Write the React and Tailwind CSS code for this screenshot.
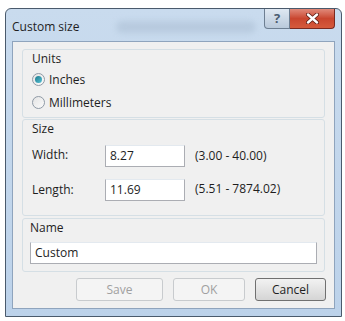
import React from 'react';

function Group({ title, children, className = '' }) {
  return (
    <div className={`border border-[#d5dfe5] rounded-[3px] px-[7px] ${className}`}>
      <div className="text-[12px] leading-none text-[#1e1e1e] -mt-[1px] pt-[4px]">{title}</div>
      {children}
    </div>
  );
}

function Radio({ checked, label }) {
  return (
    <div className="flex items-center gap-[4px] h-[23px]">
      <span className="w-[13px] h-[13px] rounded-full border border-[#8f9aa6] bg-gradient-to-br from-[#e4e4e4] to-[#fbfbfb] flex items-center justify-center">
        {checked && <span className="w-[7px] h-[7px] rounded-full bg-gradient-to-br from-[#1c7a8c] to-[#56c2d6]" />}
      </span>
      <span className="text-[12px] text-[#1e1e1e]">{label}</span>
    </div>
  );
}

function Btn({ children, disabled }) {
  return (
    <div
      className={`h-[23px] rounded-[3px] border flex items-center justify-center text-[12px] ${
        disabled
          ? 'border-[#c8cbce] bg-[#f4f4f4] text-[#a0a0a0]'
          : 'border-[#707070] bg-gradient-to-b from-[#f2f2f2] to-[#d5d5d5] text-[#1e1e1e]'
      }`}
    >
      {children}
    </div>
  );
}

export default function App() {
  return (
    <div className="w-[345px] h-[321px] bg-white pt-[8px] pl-[5px]" style={{ fontFamily: '"Open Sans", "Noto Sans", sans-serif' }}>
      <div className="w-[337px] h-[309px] rounded-t-[6px] border border-[#4a5a6c] bg-gradient-to-b from-[#c9dbee] to-[#bcd2ea] flex flex-col">
        {/* title bar */}
        <div className="h-[32px] flex items-start relative">
          <div className="pl-[6px] pt-[9px] text-[12px] text-[#1e1e1e]">Custom size</div>
          <div className="absolute left-[110px] top-[12px] w-[140px] h-[12px] rounded-full bg-[#9fb2c8] opacity-40 blur-[3px]" />
          <div className="ml-auto mr-[6px] flex">
            <div className="w-[26px] h-[20px] rounded-bl-[4px] border border-t-0 border-[#6d7e92] bg-gradient-to-b from-[#dfe8f2] to-[#b9c9db] flex items-center justify-center text-[13px] font-bold text-[#4a5b70]">?</div>
            <div className="w-[45px] h-[20px] rounded-br-[4px] border border-t-0 border-l-0 border-[#7a2a20] bg-gradient-to-b from-[#e0897a] via-[#c9462f] to-[#d55a3c] flex items-center justify-center">
              <svg width="13" height="11" viewBox="0 0 13 11">
                <path d="M2 1.5 L11 9.5 M11 1.5 L2 9.5" stroke="#5a1a12" strokeWidth="4" strokeLinecap="round" />
                <path d="M2 1.5 L11 9.5 M11 1.5 L2 9.5" stroke="#ffffff" strokeWidth="2.4" strokeLinecap="round" />
              </svg>
            </div>
          </div>
        </div>
        {/* client area */}
        <div className="mx-[6px] h-[268px] border border-[#8fa4bd] bg-[#f0f0f0] px-[9px] pt-[7px]">
          <Group title="Units" className="h-[69px] pl-[9px]">
            <div className="pt-[3px]">
              <Radio checked label="Inches" />
              <Radio label="Millimeters" />
            </div>
          </Group>
          <Group title="Size" className="h-[97px] mt-[1px] pl-[9px]">
            <div className="grid grid-cols-[73px_80px_1fr] items-center gap-y-[12px] pt-[10px]">
              <span className="text-[12px] text-[#1e1e1e] -mt-[3px]">Width:</span>
              <div className="h-[22px] border border-[#abadb3] border-t-[#e3e9ef] bg-white text-[12px] px-[4px] leading-[20px] text-[#1e1e1e]">8.27</div>
              <span className="pl-[10px] text-[12px] text-[#1e1e1e]">(3.00 - 40.00)</span>
              <span className="text-[12px] text-[#1e1e1e]">Length:</span>
              <div className="h-[22px] border border-[#abadb3] border-t-[#e3e9ef] bg-white text-[12px] px-[4px] leading-[20px] text-[#1e1e1e]">11.69</div>
              <span className="pl-[10px] text-[12px] text-[#1e1e1e] -mt-[3px]">(5.51 - 7874.02)</span>
            </div>
          </Group>
          <Group title="Name" className="h-[54px] mt-[2px] pl-[7px] pr-[7px]">
            <div className="mt-[8px] h-[22px] border border-[#abadb3] border-t-[#e3e9ef] bg-white text-[12px] px-[4px] leading-[20px] text-[#1e1e1e]">Custom</div>
          </Group>
          <div className="flex justify-end gap-[10px] mt-[6px] -mr-[1px]">
            <div className="w-[87px]"><Btn disabled>Save</Btn></div>
            <div className="w-[72px]"><Btn disabled>OK</Btn></div>
            <div className="w-[71px]"><Btn>Cancel</Btn></div>
          </div>
        </div>
      </div>
    </div>
  );
}
